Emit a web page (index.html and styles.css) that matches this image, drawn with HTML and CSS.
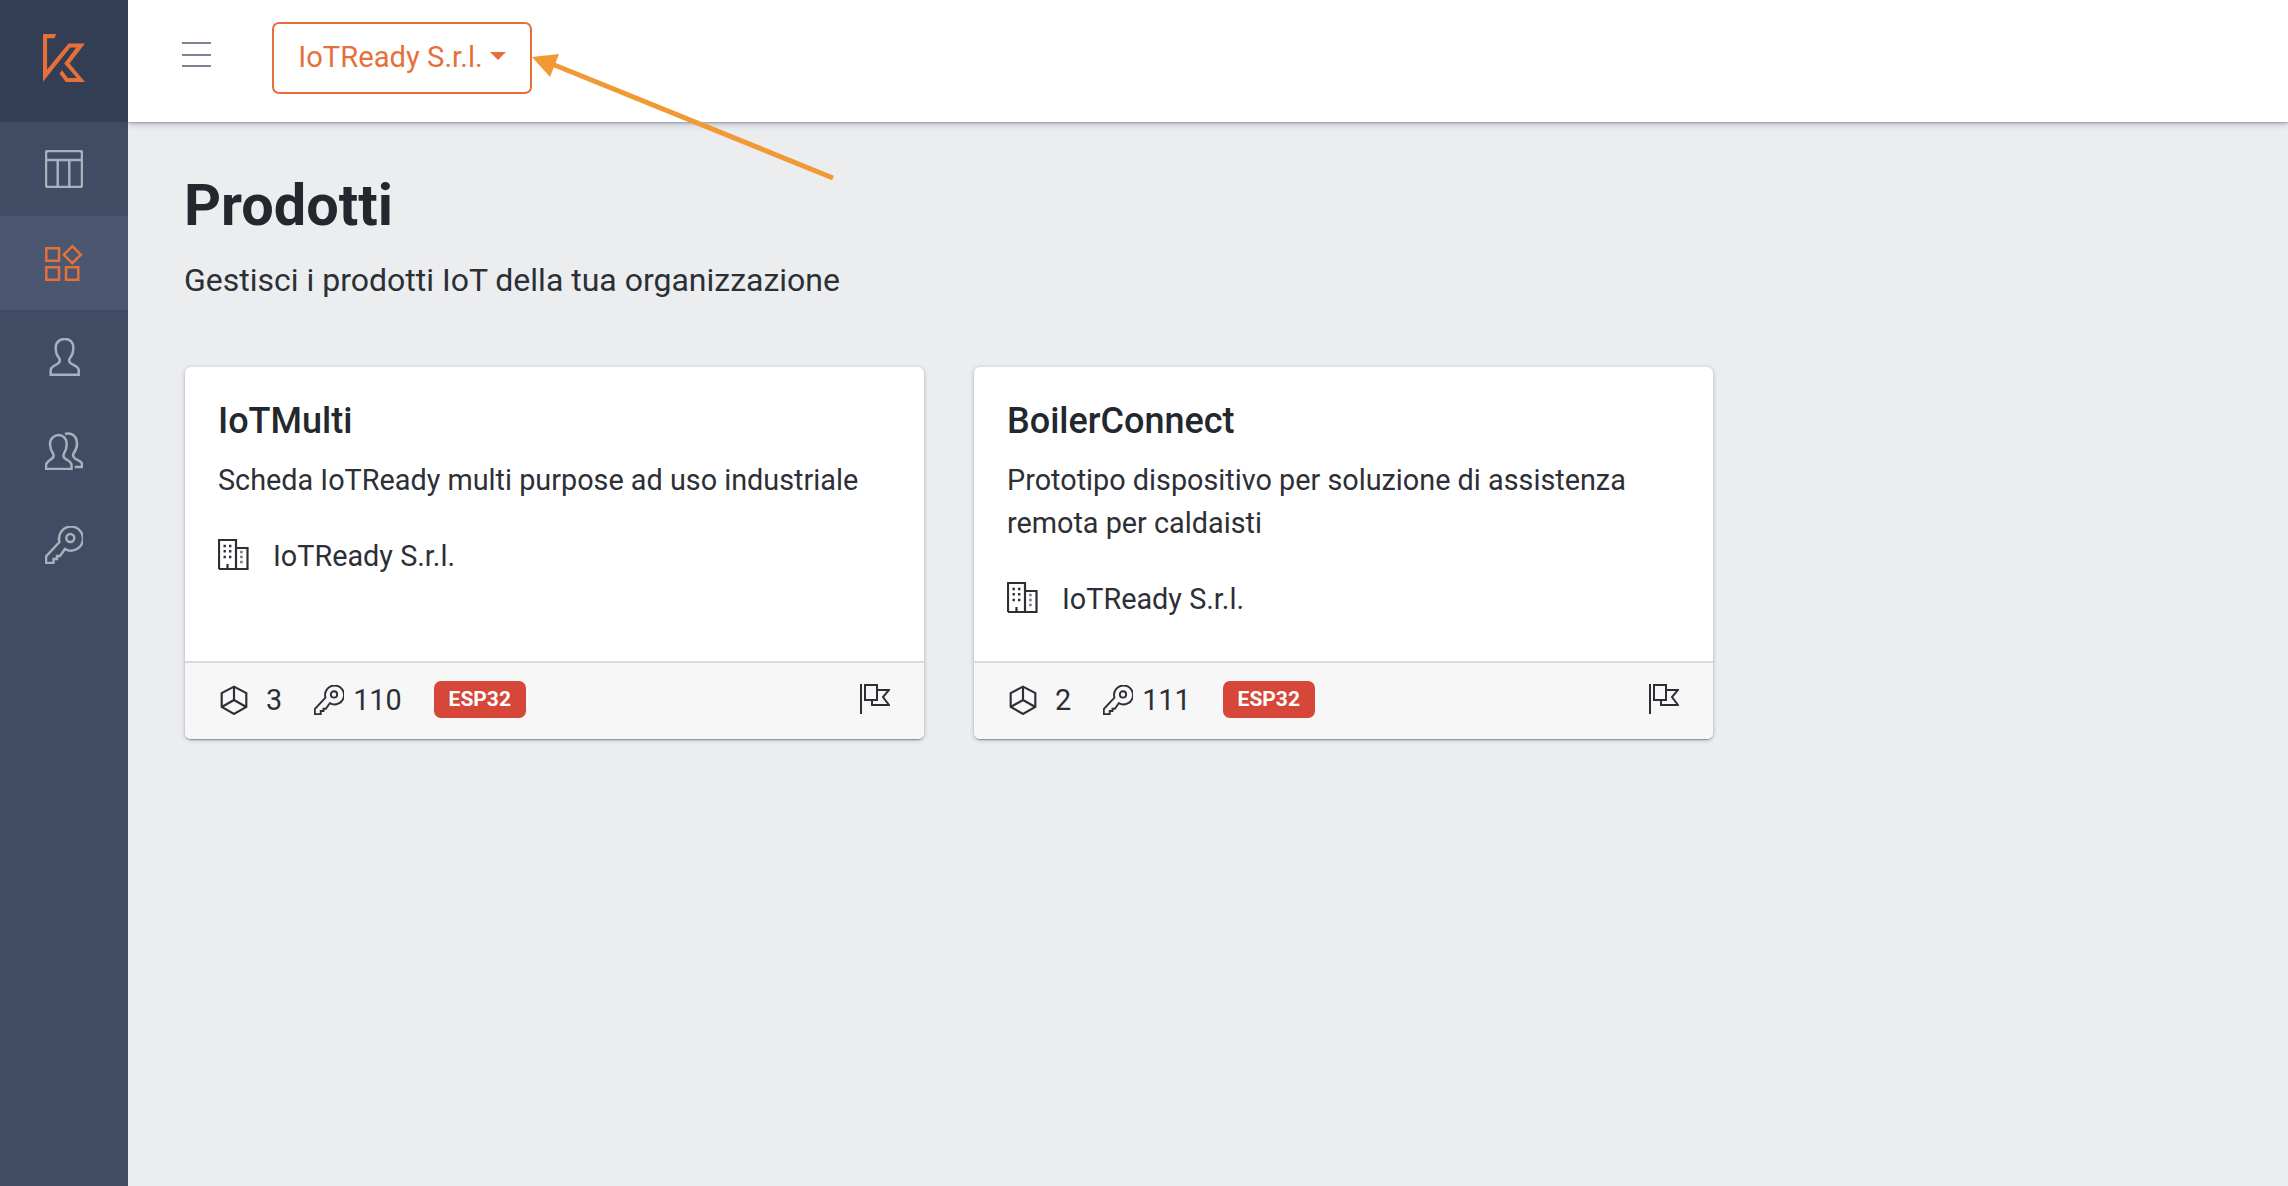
FILE: index.html
```html
<!DOCTYPE html>
<html lang="it">
<head>
<meta charset="utf-8">
<title>Prodotti</title>
<link rel="stylesheet" href="styles.css">
</head>
<body>
<svg class="defs" width="0" height="0" aria-hidden="true">
  <symbol id="i-key" viewBox="0 0 38 38"><path d="M14.5 16 1 30.5V37h7.5v-4H12v-3h3l5-7A12 12 0 1 0 14.5 16Z"/><circle cx="25.3" cy="12" r="4"/></symbol>
  <symbol id="i-cube" viewBox="0 0 28 28"><path d="M14 1.5 25.5 7.5V20.5L14 27 2.5 20.5V7.5Z"/><path d="M14 1.5V14M14 14 2.5 20.5M14 14 25.5 20.5"/></symbol>
  <symbol id="i-building" viewBox="0 0 31 31"><path d="M1 30V1H18V30M18 9H29.5V30H1"/><path d="M9.5 30V25"/><path class="dots" d="M5.5 7h2.400M11 7h2.400M5.5 12.300h2.400M11 12.300h2.400M5.500 18h2.400M11 18h2.400"/><path class="dots dots-soft" d="M22.200 13h2.400M22.200 18h2.400M22.200 23h2.400"/></symbol>
  <symbol id="i-flag" viewBox="0 0 30 30"><path d="M1 0V30"/><path d="M5 1H17V16H5ZM12 16V21H29L23 13 29 6H17"/></symbol>
</svg>
<div class="app">
  <nav class="sidebar">
    <div class="brand">
      <svg class="logo" viewBox="129 102 125 143"><path d="M129 102H168L163 115H141V208L205 130H254L208 190 254 245H197L178 220 186 210 203 233H230L192 190 228 142H210L129 244Z"/></svg>
    </div>
    <a class="nav-item">
      <svg class="nav-icon" viewBox="0 0 38 38"><rect x="1" y="1" width="36" height="36" rx="2"/><path d="M1 10H37M12.700 10V37M24.300 10V37"/></svg>
    </a>
    <a class="nav-item active">
      <svg class="nav-icon" viewBox="0 0 38 38"><path d="M1.300 4.300H14V16.700H1.300ZM1.300 23.300H14V35.700H1.300ZM21 23.300H33.300V35.700H21ZM27.300 2.200 35.800 10.700 27.300 19.200 18.800 10.700Z"/></svg>
    </a>
    <a class="nav-item">
      <svg class="nav-icon" viewBox="0 0 38 38"><path d="M5.700 36.700H33.700V32C33.700 29 30 28 26 25.500 24 24 23.500 22 25 20 27.500 17 28.300 13 28.300 10 28.300 4 24.500 1 19.700 1 15 1 10.700 4 10.700 10 10.700 13 11.500 17 14 20 15.500 22 15 24 13 25.500 9 28 5.700 29 5.700 32Z"/></svg>
    </a>
    <a class="nav-item">
      <svg class="nav-icon" viewBox="0 0 38 38"><path d="M1 37H26.500V33C26.500 30 23.500 29 20 26.500 18 25 18 23.500 19 21.500 21 18.500 21.700 15.500 21.700 12 21.700 6.500 18 3 13.700 3 9.500 3 5 6.500 5 12 5 15.500 6 18.500 8 21.500 9 23.500 9 25 7 26.500 4 29 1 30 1 33Z"/><path d="M20 2C24 .5 32 2 32 12 32 16 30 19.500 28.500 21.500 27.500 23.500 28 25 30 26.500 33 28.500 37 29 37 32V35H29.700"/></svg>
    </a>
    <a class="nav-item">
      <svg class="nav-icon"><use href="#i-key"/></svg>
    </a>
  </nav>
  <div class="content">
    <header class="topbar">
      <button class="burger" aria-label="Menu"><span></span><span></span><span></span></button>
      <button class="org-btn">IoTReady S.r.l.<i class="caret"></i></button>
    </header>
    <main class="main">
      <h1 class="title">Prodotti</h1>
      <p class="subtitle">Gestisci i prodotti IoT della tua organizzazione</p>
      <div class="cards">
        <article class="card">
          <div class="card-body">
            <h2 class="card-title">IoTMulti</h2>
            <p class="card-desc">Scheda IoTReady multi purpose ad uso industriale</p>
            <div class="org"><svg class="ico-org"><use href="#i-building"/></svg><span>IoTReady S.r.l.</span></div>
          </div>
          <div class="card-foot">
            <svg class="ico-cube"><use href="#i-cube"/></svg><span class="num num-a">3</span>
            <svg class="ico-key"><use href="#i-key"/></svg><span class="num num-b">110</span>
            <span class="badge">ESP32</span>
            <svg class="ico-flag"><use href="#i-flag"/></svg>
          </div>
        </article>
        <article class="card">
          <div class="card-body">
            <h2 class="card-title">BoilerConnect</h2>
            <p class="card-desc">Prototipo dispositivo per soluzione di assistenza remota per caldaisti</p>
            <div class="org"><svg class="ico-org"><use href="#i-building"/></svg><span>IoTReady S.r.l.</span></div>
          </div>
          <div class="card-foot">
            <svg class="ico-cube"><use href="#i-cube"/></svg><span class="num num-a">2</span>
            <svg class="ico-key"><use href="#i-key"/></svg><span class="num num-b">111</span>
            <span class="badge">ESP32</span>
            <svg class="ico-flag"><use href="#i-flag"/></svg>
          </div>
        </article>
      </div>
    </main>
  </div>
</div>
<svg class="arrow" width="320" height="140" viewBox="0 0 320 140"><path class="arrow-line" d="M301 124 20 10"/><path class="arrow-head" d="M0 3 27 0 18 23Z"/></svg>
</body>
</html>
```

FILE: styles.css
```css
* { box-sizing: border-box; }
html, body { margin: 0; height: 100%; }
body {
  font-family: Roboto, "Liberation Sans", sans-serif;
  font-size: 28.8px;
  line-height: 43px;
  color: #2c2f36;
  background: #ebedef;
  overflow: hidden;
}
.defs { position: absolute; }
.app { display: flex; height: 100%; }

.sidebar { width: 128px; flex: none; background: #3f4c63; display: flex; flex-direction: column; }
.brand { height: 122px; background: #333e54; display: flex; align-items: center; justify-content: center; padding-bottom: 6px; }
.logo { width: 42px; height: 48px; fill: #e6703a; }
.nav-item { height: 94px; display: flex; align-items: center; justify-content: center; }
.nav-item.active { background: #4b5770; }
.nav-icon { width: 38px; height: 38px; fill: none; stroke: #a9afbb; stroke-width: 2.5; }
.active .nav-icon { stroke: #e6703a; }

.content { flex: 1; display: flex; flex-direction: column; min-width: 0; }
.topbar {
  height: 122px; background: #fff; display: flex; align-items: flex-start;
  padding: 22px 0 0 54px;
  box-shadow: 0 1px 2px rgba(60,75,100,.35), 0 2px 7px rgba(60,75,100,.3);
}
.burger { width: 29px; height: 25px; margin: 20px 0 0; padding: 0; border: 0; background: none; display: flex; flex-direction: column; justify-content: space-between; }
.burger span { display: block; height: 2px; background: #7c8494; }
.org-btn {
  margin-left: 61px; width: 260px; height: 72px; padding: 0;
  font: 400 29.2px/1.5 Roboto, "Liberation Sans", sans-serif; color: #e6703a;
  background: #fff; border: 2px solid #e6703a; border-radius: 7px;
  display: flex; align-items: center; justify-content: center;
}
.caret { width: 0; height: 0; margin-left: 7px; margin-top: -4px; border: 8px solid transparent; border-top-color: #e6703a; border-bottom: 0; }

.main { padding: 48.5px 0 0 56px; flex: 1; }
.title { margin: 0; font-size: 57.6px; line-height: 69px; font-weight: 700; color: #23272e; }
.subtitle { margin: 18px 0 0; font-size: 32px; line-height: 45px; }
.cards { display: flex; gap: 50px; margin: 64px 0 0 1px; align-items: stretch; }
.card {
  width: 739px; background: #fff; border-radius: 6px; overflow: hidden; display: flex; flex-direction: column;
  box-shadow: 0 1px 1px rgba(60,75,100,.25), 0 2px 1px -1px rgba(60,75,100,.25), 0 1px 4px rgba(60,75,100,.35);
}
.card-body { flex: 1; padding: 33px 33px 40px; }
.card-title { margin: 0; font-size: 36px; line-height: 42px; font-weight: 500; color: #23272e; }
.card-desc { margin: 17px 0 0; }
.org { display: flex; align-items: center; gap: 24px; margin-top: 33px; }
.ico-org { width: 31px; height: 31px; fill: none; stroke: #2c2f36; stroke-width: 2.2; margin-bottom: 3px; }
.dots { stroke-width: 2.4; }
.dots-soft { stroke: #6d7178; }
.card-foot { height: 78px; border-top: 2px solid #d8dbe0; background: #f7f7f7; display: flex; align-items: center; padding: 0 34px; }
.ico-cube { width: 30px; height: 30px; fill: none; stroke: #2c2f36; stroke-width: 2; margin-bottom: 2px; }
.ico-key { width: 30px; height: 30px; fill: none; stroke: #2c2f36; stroke-width: 2.4; margin-bottom: 2px; }
.ico-flag { width: 30px; height: 30px; fill: none; stroke: #2c2f36; stroke-width: 2; margin-left: auto; margin-bottom: 4px; }
.num-a { margin-left: 17px; margin-right: 32px; }
.num-b { margin-left: 9px; margin-right: 32px; }
.badge { background: #d64639; color: #fff; font-size: 21px; font-weight: 700; line-height: 37px; width: 92px; text-align: center; border-radius: 7px; margin-bottom: 3px; }

.arrow { position: absolute; left: 532px; top: 54px; overflow: visible; }
.arrow-line { stroke: #f19a35; stroke-width: 5; fill: none; }
.arrow-head { fill: #f19a35; }
```
